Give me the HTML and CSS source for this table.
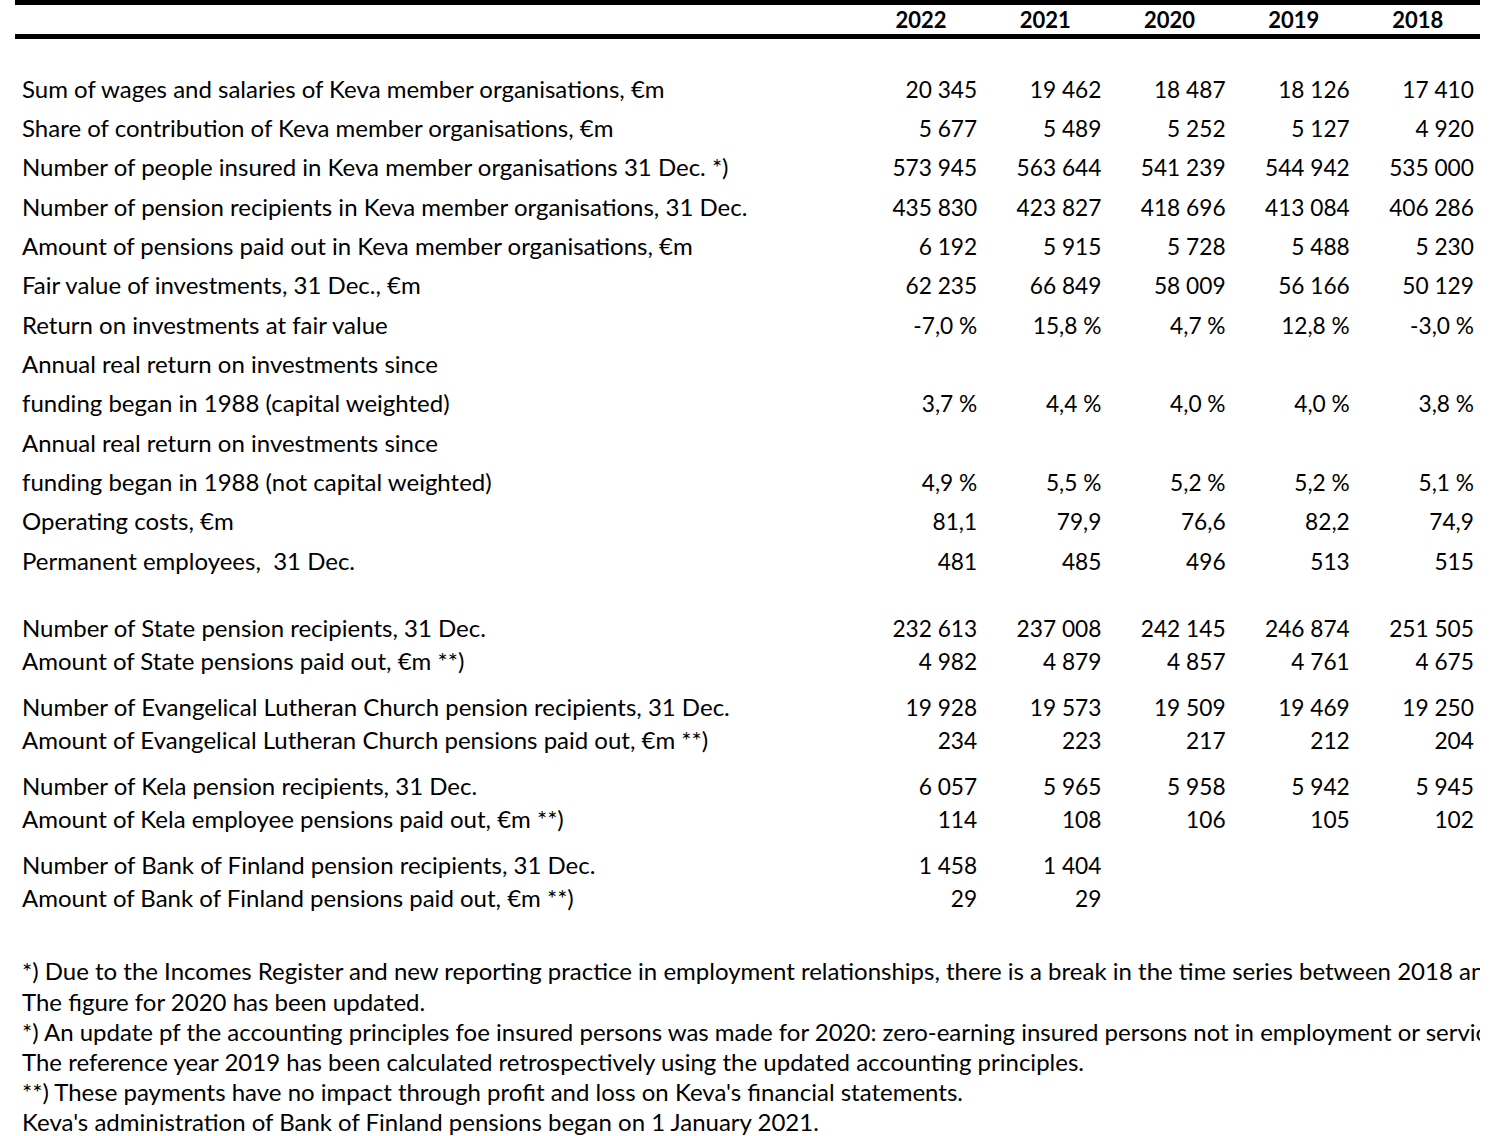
FILE: index.html
```html
<!DOCTYPE html>
<html>
<head>
<meta charset="utf-8">
<link rel="stylesheet" href="styles.css">
</head>
<body>
<div class="sheet">
  <div class="row head">
    <div class="lbl"></div><div class="yr">2022</div><div class="yr">2021</div><div class="yr">2020</div><div class="yr">2019</div><div class="yr">2018</div>
  </div>
  <div class="blank"></div>
  <div class="row"><div class="lbl">Sum of wages and salaries of Keva member organisations, €m</div><div class="v">20 345</div><div class="v">19 462</div><div class="v">18 487</div><div class="v">18 126</div><div class="v">17 410</div></div>
  <div class="row"><div class="lbl">Share of contribution of Keva member organisations, €m</div><div class="v">5 677</div><div class="v">5 489</div><div class="v">5 252</div><div class="v">5 127</div><div class="v">4 920</div></div>
  <div class="row"><div class="lbl">Number of people insured in Keva member organisations 31 Dec. *)</div><div class="v">573 945</div><div class="v">563 644</div><div class="v">541 239</div><div class="v">544 942</div><div class="v">535 000</div></div>
  <div class="row"><div class="lbl">Number of pension recipients in Keva member organisations, 31 Dec.</div><div class="v">435 830</div><div class="v">423 827</div><div class="v">418 696</div><div class="v">413 084</div><div class="v">406 286</div></div>
  <div class="row"><div class="lbl">Amount of pensions paid out in Keva member organisations, €m</div><div class="v">6 192</div><div class="v">5 915</div><div class="v">5 728</div><div class="v">5 488</div><div class="v">5 230</div></div>
  <div class="row"><div class="lbl">Fair value of investments, 31 Dec., €m</div><div class="v">62 235</div><div class="v">66 849</div><div class="v">58 009</div><div class="v">56 166</div><div class="v">50 129</div></div>
  <div class="row"><div class="lbl">Return on investments at fair value</div><div class="v">-7,0 %</div><div class="v">15,8 %</div><div class="v">4,7 %</div><div class="v">12,8 %</div><div class="v">-3,0 %</div></div>
  <div class="row"><div class="lbl">Annual real return on investments since</div><div class="v"></div><div class="v"></div><div class="v"></div><div class="v"></div><div class="v"></div></div>
  <div class="row"><div class="lbl">funding began in 1988 (capital weighted)</div><div class="v">3,7 %</div><div class="v">4,4 %</div><div class="v">4,0 %</div><div class="v">4,0 %</div><div class="v">3,8 %</div></div>
  <div class="row"><div class="lbl">Annual real return on investments since</div><div class="v"></div><div class="v"></div><div class="v"></div><div class="v"></div><div class="v"></div></div>
  <div class="row"><div class="lbl">funding began in 1988 (not capital weighted)</div><div class="v">4,9 %</div><div class="v">5,5 %</div><div class="v">5,2 %</div><div class="v">5,2 %</div><div class="v">5,1 %</div></div>
  <div class="row"><div class="lbl">Operating costs, €m</div><div class="v">81,1</div><div class="v">79,9</div><div class="v">76,6</div><div class="v">82,2</div><div class="v">74,9</div></div>
  <div class="row"><div class="lbl">Permanent employees,&nbsp; 31 Dec.</div><div class="v">481</div><div class="v">485</div><div class="v">496</div><div class="v">513</div><div class="v">515</div></div>

  <div class="spacer-lg"></div>
  <div class="row sm"><div class="lbl">Number of State pension recipients, 31 Dec.</div><div class="v">232 613</div><div class="v">237 008</div><div class="v">242 145</div><div class="v">246 874</div><div class="v">251 505</div></div>
  <div class="row sm"><div class="lbl">Amount of State pensions paid out, €m **)</div><div class="v">4 982</div><div class="v">4 879</div><div class="v">4 857</div><div class="v">4 761</div><div class="v">4 675</div></div>
  <div class="spacer"></div>
  <div class="row sm"><div class="lbl">Number of Evangelical Lutheran Church pension recipients, 31 Dec.</div><div class="v">19 928</div><div class="v">19 573</div><div class="v">19 509</div><div class="v">19 469</div><div class="v">19 250</div></div>
  <div class="row sm"><div class="lbl">Amount of Evangelical Lutheran Church pensions paid out, €m **)</div><div class="v">234</div><div class="v">223</div><div class="v">217</div><div class="v">212</div><div class="v">204</div></div>
  <div class="spacer"></div>
  <div class="row sm"><div class="lbl">Number of Kela pension recipients, 31 Dec.</div><div class="v">6 057</div><div class="v">5 965</div><div class="v">5 958</div><div class="v">5 942</div><div class="v">5 945</div></div>
  <div class="row sm"><div class="lbl">Amount of Kela employee pensions paid out, €m **)</div><div class="v">114</div><div class="v">108</div><div class="v">106</div><div class="v">105</div><div class="v">102</div></div>
  <div class="spacer"></div>
  <div class="row sm"><div class="lbl">Number of Bank of Finland pension recipients, 31 Dec.</div><div class="v">1 458</div><div class="v">1 404</div><div class="v"></div><div class="v"></div><div class="v"></div></div>
  <div class="row sm"><div class="lbl">Amount of Bank of Finland pensions paid out, €m **)</div><div class="v">29</div><div class="v">29</div><div class="v"></div><div class="v"></div><div class="v"></div></div>

  <div class="notes">
    <div class="note">*) Due to the Incomes Register and new reporting practice in employment relationships, there is a break in the time series between 2018 and 2019.</div>
    <div class="note">The figure for 2020 has been updated.</div>
    <div class="note">*) An update pf the accounting principles foe insured persons was made for 2020: zero-earning insured persons not in employment or service relationships were excluded.</div>
    <div class="note">The reference year 2019 has been calculated retrospectively using the updated accounting principles.</div>
    <div class="note">**) These payments have no impact through profit and loss on Keva's financial statements.</div>
    <div class="note">Keva's administration of Bank of Finland pensions began on 1 January 2021.</div>
  </div>
</div>
</body>
</html>
```

FILE: styles.css
```css
html, body {
  margin: 0;
  padding: 0;
  background: #ffffff;
}
body {
  font-family: "Lato", "Open Sans", "Liberation Sans", sans-serif;
  color: #000000;
  overflow: hidden;
}
.sheet {
  width: 1465px;
  margin-left: 15px;
}
.row {
  display: grid;
  grid-template-columns: 844px repeat(5, 124.2px);
  height: 39.33px;
  align-items: center;
  font-size: 24px;
}
.row.sm {
  height: 32.5px;
}
.head {
  height: 29px;
  border-top: 5px solid #000;
  border-bottom: 5px solid #000;
}
.yr {
  text-align: center;
  font-weight: bold;
  font-size: 22px;
}
.lbl {
  padding-left: 7px;
  white-space: nowrap;
  padding-bottom: 2px;
}
.v {
  text-align: right;
  padding-right: 6px;
  white-space: nowrap;
  font-size: 22.7px;
}
.blank {
  height: 30.5px;
}
.spacer-lg {
  height: 31.7px;
}
.spacer {
  height: 14px;
}
.notes {
  margin-top: 42px;
  overflow: hidden;
  width: 1465px;
}
.note {
  height: 30.2px;
  line-height: 30.2px;
  padding-left: 7px;
  white-space: nowrap;
  font-size: 24px;
}
```
